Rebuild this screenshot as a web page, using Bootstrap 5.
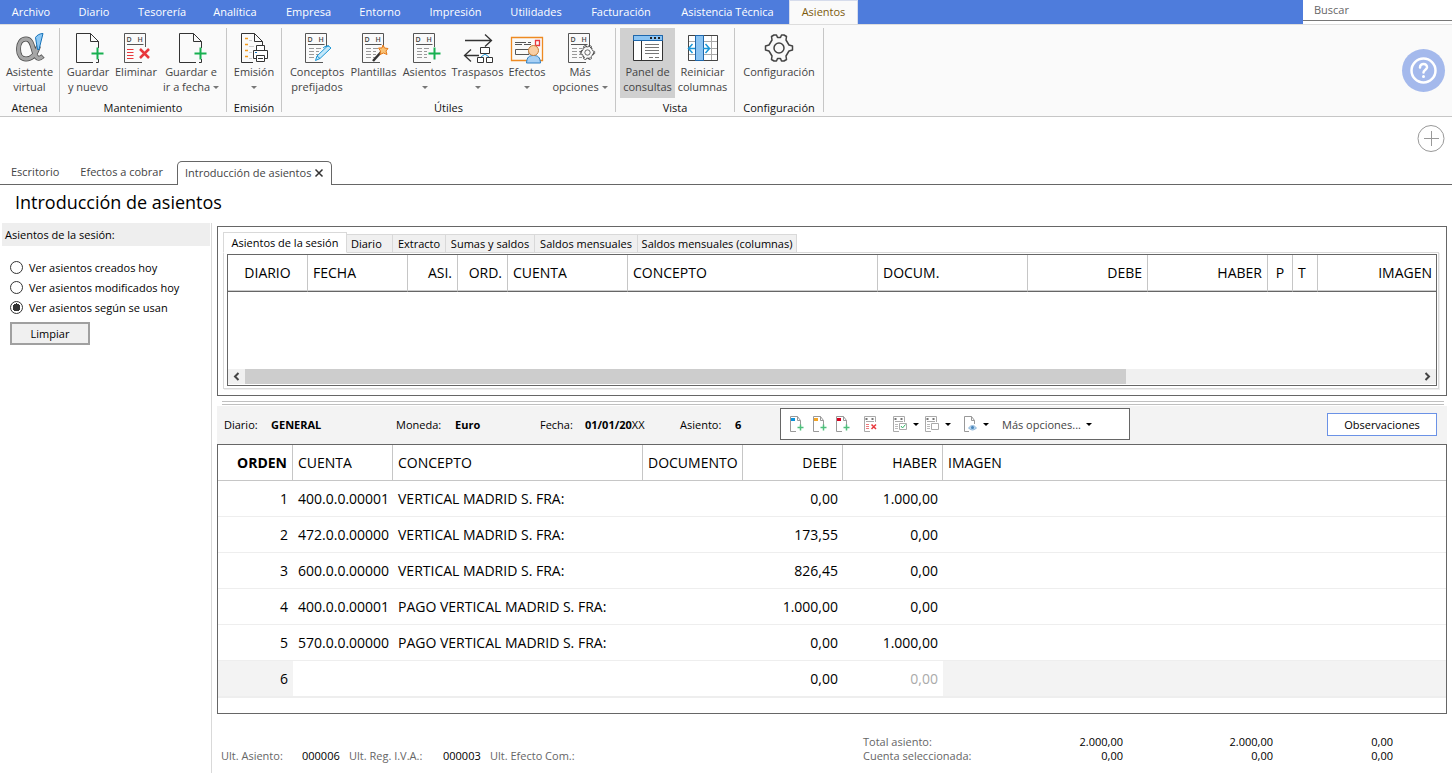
<!DOCTYPE html>
<html lang="es">
<head>
<meta charset="utf-8">
<meta name="viewport" content="width=device-width, initial-scale=1">
<title>Introducción de asientos</title>
<link href="https://cdn.jsdelivr.net/npm/bootstrap@5.3.0/dist/css/bootstrap.min.css" rel="stylesheet">
<style>
  :root { --blue: #4e7cdc; --ink: #666; --rule: #c6c6c6; --soft: #f3f3f3; }
  body { font: 11px/15px "Open Sans", "Noto Sans", sans-serif; color: #000; background: #fff; }
  button, input { font: inherit; }
  svg { display: block; fill: none; }

  /* menu bar */
  .menubar { background: var(--blue); height: 24px; }
  .menugrid { display: grid; grid-template-columns: 62px 64px 72px 74px 73px 70px 81px 80px 90px 123px 69px; }
  .menugrid a { color: #fff; text-decoration: none; text-align: center; line-height: 24px; }
  .menugrid a.on { background: #fafafa; color: #7d5a0c; border: 1px solid #d6dcec; border-bottom: 0; line-height: 22px; }
  .finder { width: 149px; background: #fff; }
  .finder input { width: 100%; height: 21px; border: 0; border-bottom: 1px solid #777; border-radius: 0; padding: 0 11px 2px; color: #555; outline: 0; }
  .finder input::placeholder { color: #666; opacity: 1; }

  /* ribbon */
  .ribbon { background: #fafafa; border-bottom: 1px solid var(--rule); border-top: 1px solid #ddd; height: 93px; }
  .rgroup { border-right: 1px solid var(--rule); margin: 3px 0 4px; padding: 0 4px; }
  .rgroup h2 { font-size: 11px; line-height: 15px; margin: 2px 0 0; text-align: center; color: #111; }
  .tool { display: flex; flex-direction: column; align-items: center; justify-content: flex-start; border: 0; background: none; padding: 4px 0 0; color: #444; height: 70px; white-space: nowrap; flex: none; }
  .tool svg { flex: none; }
  .tool span { display: block; line-height: 15px; }
  .tool.on { background: #d0d0d0; }
  .car { display: inline-block; width: 0; height: 0; border: 3px solid transparent; border-top-color: #777; border-bottom: 0; vertical-align: 2px; }
  .w44 { width: 44px; } .w46 { width: 46px; } .w48 { width: 48px; } .w51 { width: 51px; } .w55 { width: 55px; }
  .w62 { width: 62px; } .w80 { width: 80px; }
  .icons text { font: 600 7px "Open Sans", sans-serif; fill: #444; stroke: none; }
  .help { width: 43px; height: 43px; border: 0; padding: 0; border-radius: 50%; background: #a4b9ec; margin-right: 7px; transform: none; }
  .adder { padding: 8px 7px 8px 0; }
  .round { width: 28px; height: 28px; border: 0; padding: 0; background: none; }

  /* document tabs */
  .doctabs { border-bottom: 1px solid var(--ink); height: 24px; padding-left: 11px; }
  .doctabs a { color: #444; text-decoration: none; line-height: 22px; }
  .doctabs > a { margin-right: 21px; }
  .doctabs > a + a { margin-right: 14px; }
  .doctabs .on { border: 1px solid var(--ink); border-bottom: 0; border-radius: 5px 5px 0 0; background: #fff; height: 24px; padding: 0 7px 2px; gap: 3px; }
  .doctabs button { border: 0; background: none; padding: 0; }
  h1 { font-size: 18px; line-height: 24px; margin: 5px 0 9px 15px; }

  /* side panel */
  .side { width: 212px; border-right: 1px solid #d9d9d9; flex: none; }
  .side h2 { background: #eee; font-size: 11px; line-height: 22px; margin: 0 1px 11px 2px; padding: 1px 0 0 3px; height: 23px; }
  .side label { display: flex; align-items: center; gap: 6px; height: 20px; padding-left: 10px; }
  .side input { appearance: none; width: 13px; height: 13px; margin: 0; border: 1px solid #333; border-radius: 50%; background: #fff; }
  .side input:checked { background: radial-gradient(circle, #333 0 4px, #fff 4px); }
  .clear { margin: 5px 0 0 10px; width: 80px; height: 23px; padding: 0; border: 2px solid #a0a0a0; background: #f0f0f0; }

  /* query panel */
  .work { padding: 3px 5px 0; }
  .query { border: 1px solid var(--ink); padding: 5px 7px 6px 5px; }
  .qtabs { display: grid; grid-template-columns: 124px 46px 53px 89px 103px 159px; align-items: end; position: relative; z-index: 1; margin-bottom: -1px; }
  .qtabs button { height: 19px; border: 1px solid #d9d9d9; border-left: 0; background: #f0f0f0; padding: 0; line-height: 17px; white-space: nowrap; }
  .qtabs button.on { height: 21px; background: #fff; border-left: 1px solid #d9d9d9; border-bottom-color: #fff; }
  .qbody { border: 1px solid #d9d9d9; box-shadow: 1px 1px 0 #eee; padding: 1px 1px 2px 3px; }
  .qgrid { border: 1px solid var(--ink); height: 132px; }
  .grid { table-layout: fixed; width: 100%; border-collapse: separate; border-spacing: 0; font-size: 14px; line-height: 20px; }
  .grid th { font-weight: 400; height: 36px; padding: 0 5px; border-right: 1px solid var(--rule); border-bottom: 1px solid var(--rule); white-space: nowrap; }
  .grid th:last-child { border-right: 0; }
  .grid td { height: 36px; padding: 0 5px; border-bottom: 1px solid #eee; white-space: nowrap; }
  .qgrid th { border-bottom: 1px solid var(--ink); box-shadow: inset 0 -1px 0 #ccc; height: 37px; }
  .qgrid th:last-child { padding-right: 4px; }
  .track { background: #f0f0f0; height: 15px; margin-bottom: 1px; }
  .track button { width: 17px; border: 0; background: none; padding: 0 5px; }
  .thumb { background: #cdcdcd; width: 75%; }
  .splitter { height: 4px; margin: 5px 3px 1px 5px; border: 1px solid #c0c0c0; border-width: 1px 0; }

  /* entry header */
  .entry { background: var(--soft); height: 38px; padding: 0 10px 2px 7px; }
  .facts { display: grid; grid-template-columns: 47px 125px 59px 85px 45px 95px 55px 45px; flex: none; }
  .bar { border: 1px solid var(--ink); background: #fff; width: 350px; height: 32px; padding-left: 7px; flex: none; }
  .bar button { border: 0; background: none; padding: 0; color: #444; display: flex; align-items: center; margin-right: 7px; }
  .bar button.far { margin-right: 13px; }
  .bar button.near { margin-right: 5px; }
  .bar .car { border-top-color: #000; margin-left: 5px; }
  .obs { width: 110px; height: 23px; padding: 0; border: 1px solid #6b92e6; background: #fff; }
  .lines { border: 1px solid var(--ink); height: 270px; }
  .lines tr.fresh td { background: var(--soft); height: 37px; border-bottom: 2px solid #eee; }
  .lines tr.fresh td.edit { background: #fff; }
  .lines tr.fresh td.idle { color: #aaa; }

  /* footer */
  .foot { color: #666; line-height: 14px; padding: 21px 0 0 4px; }
  .foot b { color: #000; font-weight: 400; }
  .last { display: grid; grid-template-columns: 81px 47px 94px 47px auto; align-self: end; }
  .sums { display: grid; grid-template-columns: 110px 150px 150px 120px; margin-right: 54px; }
  .sums b { text-align: right; }
</style>
</head>
<body>
<svg width="0" height="0" class="position-absolute icons" aria-hidden="true">
  <defs>
    <symbol id="page" viewBox="0 0 32 32">
      <path d="M21 30.500H4.500V1.500H18.500L26.500 9.500V16M18.500 1.500V9.500H26.500M24 30.500H26.500V27" stroke="#333"/>
      <path d="M25.500 15.500V27.500M19.500 21.500H31.500" stroke="#17b050" stroke-width="2"/>
    </symbol>
    <symbol id="ledger" viewBox="0 0 32 32">
      <path d="M22 30.500H4.500V1.500H25.500V15M7 12.500H23.500" stroke="#555"/>
      <text x="6.500" y="9.500">D</text><text x="17.500" y="9.500">H</text>
    </symbol>
    <symbol id="rows" viewBox="0 0 32 32"><path d="M8 16.500H13M8 19.500H13M8 22.500H13M8 25.500H13M15 16.500H20M15 19.500H18M15 22.500H18M15 25.500H18" stroke="#999"/></symbol>
    <symbol id="gear" viewBox="0 0 32 32">
      <path d="M11 3H13.500L14.500 5.500H17.500L18.500 3H21L23.500 4.500L23 8L24.500 10.500L26 13L29.500 14V18L26 19L24.500 21.500L23 24L23.500 27.500L21 29H18.500L17.500 26.500H14.500L13.500 29H11L8.500 27.500L9 24L7.500 21.500L6 19L2.500 18V14L6 13L7.500 10.500L9 8L8.500 4.500Z" stroke="#444" stroke-width="1.500" stroke-linejoin="round"/>
      <circle cx="16" cy="16" r="5" stroke="#444" stroke-width="1.500"/>
    </symbol>
    <symbol id="mini" viewBox="0 0 16 16">
      <path d="M8 15.500H2.500V.500H9.500L12.500 4.500V9M9.500 .500V4.500H12.500" stroke="#999"/>
      <path d="M12.500 8.500V14.500M9.500 11.500H15.500" stroke="#4fc07c" stroke-width="1.500"/>
    </symbol>
    <symbol id="miniledger" viewBox="0 0 16 16">
      <path d="M7 15.500H1.500V.500H12.500V6M3 5.500H11" stroke="#aaa"/><path d="M3.500 2V4M9.500 2V4" stroke="#777" stroke-width="2"/>
    </symbol>
  </defs>
</svg>

<div class="d-flex flex-column min-vh-100">
<nav class="menubar d-flex justify-content-between">
  <div class="menugrid">
    <a href="#">Archivo</a><a href="#">Diario</a><a href="#">Tesorería</a><a href="#">Analítica</a><a href="#">Empresa</a><a href="#">Entorno</a><a href="#">Impresión</a><a href="#">Utilidades</a><a href="#">Facturación</a><a href="#">Asistencia Técnica</a><a href="#" class="on">Asientos</a>
  </div>
  <div class="finder"><input type="text" placeholder="Buscar" aria-label="Buscar"></div>
</nav>

<header class="ribbon d-flex icons">
  <section class="rgroup">
    <div class="d-flex"><button class="tool w51" type="button">
      <svg width="32" height="32" viewBox="0 0 32 32"><path d="M24.500 14C22 22 17.500 27 12 27C7.500 27 4.500 23 4.500 17C4.500 11 7.500 7 12 7C18 7 18.500 15 20.500 21C22 26 24.500 28 29 24" stroke="#4a4a4a" stroke-width="5"/><path d="M24.500 14C22 22 17.500 27 12 27C7.500 27 4.500 23 4.500 17C4.500 11 7.500 7 12 7C18 7 18.500 15 20.500 21C22 26 24.500 28 28.500 24.500" stroke="#a6a6a6" stroke-width="3.500"/><path d="M21.500 5.500C23 3 26 1.500 29 1.500L25 17.500H23.500Z" fill="#8cc8f5" stroke="#1672b8"/></svg>
      <span>Asistente</span><span>virtual</span></button></div>
    <h2>Atenea</h2>
  </section>
  <section class="rgroup">
    <div class="d-flex">
      <button class="tool w48" type="button"><svg width="32" height="32"><use href="#page"/></svg><span>Guardar</span><span>y nuevo</span></button>
      <button class="tool w48" type="button"><svg width="32" height="32" viewBox="0 0 32 32"><use href="#ledger"/><path d="M7 17.500H13.500M7 20.500H13.500M7 23.500H13.500M7 26.500H13.500" stroke="#e8383d"/><path d="M20 17L29 26M29 17L20 26" stroke="#e8383d" stroke-width="2.500"/></svg><span>Eliminar</span></button>
      <button class="tool w62" type="button"><svg width="32" height="32"><use href="#page"/></svg><span>Guardar e</span><span>ir a fecha <i class="car"></i></span></button>
    </div>
    <h2>Mantenimiento</h2>
  </section>
  <section class="rgroup">
    <div class="d-flex"><button class="tool w46" type="button">
      <svg width="32" height="32" viewBox="0 0 32 32"><path d="M15 30.500H3.500V1.500H16.500L24.500 9.500V13M16.500 1.500V9.500H24.500" stroke="#333"/><path d="M7 6.500H10M7 12.500H10M7 18.500H10M7 24.500H10" stroke="#f29a1f" stroke-width="1.500"/><path d="M11 8.500H14M11 14.500H16M11 20.500H14M11 26.500H14" stroke="#ccc"/><path d="M18.500 18V13.500H26.500V18M18 26.500H15.500V18.500H29.500V26.500H27M18.500 23.500H26.500V29.500H18.500ZM20 26.500H25" fill="#fff" stroke="#333"/><path d="M17 20.500H19" stroke="#1672b8"/></svg>
      <span>Emisión</span><span><i class="car"></i></span></button></div>
    <h2>Emisión</h2>
  </section>
  <section class="rgroup">
    <div class="d-flex">
      <button class="tool w62" type="button"><svg width="32" height="32" viewBox="0 0 32 32"><use href="#ledger"/><use href="#rows"/><path d="M14.500 28.500L16 24L27 13.500L30 16L19 26.500ZM16 24L19 26.500M22 16L24 14.500L28 14" fill="#c4e8fa" stroke="#1b96d6"/></svg><span>Conceptos</span><span>prefijados</span></button>
      <button class="tool w51" type="button"><svg width="32" height="32" viewBox="0 0 32 32"><use href="#ledger"/><use href="#rows"/><path d="M15 29L24 19" stroke="#333" stroke-width="2.500"/><path d="M25 13L26.500 16L30 16.500L28 19L29 22.500L25.500 21L22 22.500L22.500 19L20.500 16L24 16Z" fill="#f9c377" stroke="#e57917"/></svg><span>Plantillas</span></button>
      <button class="tool w51" type="button"><svg width="32" height="32" viewBox="0 0 32 32"><use href="#ledger"/><use href="#rows"/><path d="M25.500 15.500V27.500M19.500 21.500H31.500" stroke="#17b050" stroke-width="2"/></svg><span>Asientos</span><span><i class="car"></i></span></button>
      <button class="tool w55" type="button"><svg width="32" height="32" viewBox="0 0 32 32"><path d="M3 8.500H29M23 2.500L29.500 8.500L23 14.500M17 23.500H3M9 17.500L2.500 23.500L9 29.500" stroke="#333" stroke-width="1.300"/><path d="M18.500 15.500H27.500V21.500H18.500ZM15.500 25.500H21.500V30.500H15.500ZM24.500 25.500H30.500V30.500H24.500Z" stroke="#333" fill="#fff"/><path d="M23 22L19 25M23 22L27 25" stroke="#1b96d6"/></svg><span>Traspasos</span><span><i class="car"></i></span></button>
      <button class="tool w44" type="button"><svg width="34" height="32" viewBox="0 0 34 32"><path d="M1.500 5.500H32.500V28.500H1.500Z" stroke="#ee8a22" stroke-width="1.300"/><path d="M5 10.500H16M5 12.500H12M14 12.500H21M18 10.500H21M5.500 17.500H19V22.500H5.500Z" stroke="#555"/><path d="M25.500 8.500H29.500V13.500H25.500Z" stroke="#e8383d" stroke-width="1.300"/><path d="M16.500 31C17 25 19 23.500 23.500 23.500S30 25 30.500 31Z" fill="#a7d0f5" stroke="#2d7fc4"/><circle cx="23.500" cy="18.500" r="5" fill="#f9cfa5" stroke="#c77e37"/></svg><span>Efectos</span><span><i class="car"></i></span></button>
      <button class="tool w62" type="button"><svg width="32" height="32" viewBox="0 0 32 32"><use href="#ledger"/><use href="#rows"/><circle cx="23.500" cy="20.500" r="6" fill="#fafafa"/><use href="#gear" x="15" y="12" width="17" height="17"/><circle cx="23.500" cy="20.500" r="6" stroke="#444" stroke-dasharray="3 3"/></svg><span>Más</span><span>opciones <i class="car"></i></span></button>
    </div>
    <h2>Útiles</h2>
  </section>
  <section class="rgroup">
    <div class="d-flex">
      <button class="tool on w55" type="button"><svg width="32" height="32" viewBox="0 0 32 32"><path d="M1.500 3.500H30.500V28.500H1.500Z" fill="#fff" stroke="#333"/><path d="M1.500 3.500H30.500V8.500H1.500Z" fill="#8cc4f2" stroke="#1d67ad"/><path d="M18 6H20M22 6H24M26 6H28" stroke="#222" stroke-width="2"/><path d="M9.500 9V28" stroke="#333"/><path d="M13 12.500H27M13 15.500H27M13 18.500H27M13 21.500H27M17 25.500H21M23 25.500H27" stroke="#777"/></svg><span>Panel de</span><span>consultas</span></button>
      <button class="tool w55" type="button"><svg width="32" height="32" viewBox="0 0 32 32"><path d="M1.500 3.500H30.500V28.500H1.500ZM1.500 9.500H30.500M1.500 16.500H30.500M1.500 22.500H30.500M24.500 4V28" stroke="#aaa" fill="#fff"/><path d="M1.500 3.500H30.500V28.500H1.500Z" stroke="#444"/><path d="M8.500 3.500H16.500V28.500H8.500Z" fill="#8cc4f2" stroke="#1d67ad"/><path d="M8 16.500H2M5.500 12L1.500 16.500L5.500 21M16 16.500H22M18.500 12L22.500 16.500L18.500 21" stroke="#1b96d6" stroke-width="1.500"/></svg><span>Reiniciar</span><span>columnas</span></button>
    </div>
    <h2>Vista</h2>
  </section>
  <section class="rgroup">
    <div class="d-flex"><button class="tool w80" type="button"><svg width="32" height="32"><use href="#gear"/></svg><span>Configuración</span></button></div>
    <h2>Configuración</h2>
  </section>
  <button class="help ms-auto mt-4" type="button" aria-label="Ayuda"><svg width="43" height="43" viewBox="0 0 43 43"><circle cx="21.500" cy="21.500" r="12" stroke="#fff" stroke-width="2.500"/><path d="M18 18.500C18 13.500 25.500 14 25 18.500C24.500 21 21.500 21 21.500 23.500" stroke="#fff" stroke-width="2.500" stroke-linecap="round"/><circle cx="21.500" cy="27.500" r="1.500" fill="#fff"/></svg></button>
</header>

<div class="adder d-flex justify-content-end"><button class="round" type="button" aria-label="Añadir"><svg width="28" height="28" viewBox="0 0 28 28"><circle cx="14" cy="13.500" r="13" stroke="#999"/><path d="M14.500 6V21M7 13.500H22" stroke="#999"/></svg></button></div>

<nav class="doctabs d-flex">
  <a href="#">Escritorio</a>
  <a href="#">Efectos a cobrar</a>
  <div class="on d-flex align-items-center"><a href="#">Introducción de asientos</a><button type="button" aria-label="Cerrar"><svg width="10" height="10" viewBox="0 0 10 10"><path d="M1.500 1.500L8.500 8.500M8.500 1.500L1.500 8.500" stroke="#333" stroke-width="1.500"/></svg></button></div>
</nav>

<h1 class="fw-normal">Introducción de asientos</h1>

<div class="d-flex flex-grow-1">
  <aside class="side">
    <h2 class="fw-normal">Asientos de la sesión:</h2>
    <label><input type="radio" name="ver"> Ver asientos creados hoy</label>
    <label><input type="radio" name="ver"> Ver asientos modificados hoy</label>
    <label><input type="radio" name="ver" checked> Ver asientos según se usan</label>
    <button class="clear" type="button">Limpiar</button>
  </aside>

  <main class="work flex-grow-1 overflow-hidden">
    <section class="query">
      <div class="qtabs">
        <button class="on" type="button">Asientos de la sesión</button>
        <button class="text-start ps-1" type="button">Diario</button>
        <button type="button">Extracto</button>
        <button type="button">Sumas y saldos</button>
        <button type="button">Saldos mensuales</button>
        <button type="button">Saldos mensuales (columnas)</button>
      </div>
      <div class="qbody">
        <div class="qgrid d-flex flex-column">
          <table class="grid">
            <colgroup><col width="80"><col width="100"><col width="50"><col width="50"><col width="120"><col width="250"><col width="150"><col width="120"><col width="120"><col width="25"><col width="25"><col></colgroup>
            <thead><tr><th class="text-center">DIARIO</th><th>FECHA</th><th class="text-end">ASI.</th><th class="text-end">ORD.</th><th>CUENTA</th><th>CONCEPTO</th><th>DOCUM.</th><th class="text-end">DEBE</th><th class="text-end">HABER</th><th class="text-center">P</th><th>T</th><th class="text-end">IMAGEN</th></tr></thead>
          </table>
          <div class="track d-flex mt-auto">
            <button type="button" aria-label="Desplazar a la izquierda"><svg width="7" height="9" viewBox="0 0 7 9"><path d="M5.500 1L2 4.500L5.500 8" stroke="#444" stroke-width="2"/></svg></button>
            <div class="flex-grow-1 d-flex"><div class="thumb"></div></div>
            <button type="button" aria-label="Desplazar a la derecha"><svg width="7" height="9" viewBox="0 0 7 9"><path d="M1.500 1L5 4.500L1.500 8" stroke="#444" stroke-width="2"/></svg></button>
          </div>
        </div>
      </div>
    </section>

    <div class="splitter"></div>

    <section class="entry d-flex align-items-center">
      <div class="facts"><span>Diario:</span><b>GENERAL</b><span>Moneda:</span><b>Euro</b><span>Fecha:</span><span><b>01/01/20</b>XX</span><span>Asiento:</span><b>6</b></div>
      <div class="bar d-flex align-items-center">
        <button type="button" aria-label="Nuevo asiento"><svg width="16" height="16" viewBox="0 0 16 16"><use href="#mini"/><path d="M3 2H7V5H3Z" fill="#0a93dc"/></svg></button>
        <button type="button" aria-label="Nueva línea"><svg width="16" height="16" viewBox="0 0 16 16"><use href="#mini"/><path d="M3 2H7V5H3Z" fill="#f3a526"/></svg></button>
        <button class="far" type="button" aria-label="Nuevo vencimiento"><svg width="16" height="16" viewBox="0 0 16 16"><use href="#mini"/><path d="M3 2H7V5H3Z" fill="#d8001f"/></svg></button>
        <button class="far" type="button" aria-label="Eliminar línea"><svg width="16" height="16" viewBox="0 0 16 16"><use href="#miniledger"/><path d="M3 8.500H6M3 10.500H6M3 12.500H6" stroke="#ee7a7d"/><path d="M8.500 8.500L13 13M13 8.500L8.500 13" stroke="#e8383d" stroke-width="1.500"/></svg></button>
        <button class="near" type="button" aria-label="Validar"><svg width="16" height="16" viewBox="0 0 16 16"><use href="#miniledger"/><path d="M3 8.500H6M3 10.500H6M3 12.500H6" stroke="#bbb"/><path d="M7.500 7.500H14.500V13.500H7.500Z" fill="#fff" stroke="#aaa"/><path d="M9 10L10.500 12L13.500 8.500" stroke="#35b569"/></svg><i class="car"></i></button>
        <button type="button" aria-label="Marcar"><svg width="16" height="16" viewBox="0 0 16 16"><use href="#miniledger"/><path d="M3 8.500H6M3 10.500H6M3 12.500H6" stroke="#bbb"/><path d="M7.500 7.500H14.500V13.500H7.500Z" fill="#fff" stroke="#aaa"/></svg><i class="car"></i></button>
        <button class="far ms-1" type="button" aria-label="Ver documento"><svg width="16" height="16" viewBox="0 0 16 16"><path d="M7 15.500H2.500V.500H9.500L12.500 4.500V8M9.500 .500V4.500H12.500" stroke="#999"/><path d="M6.500 12Q10.500 7 14.500 12Q10.500 16 6.500 12Z" fill="#b4d4ee" stroke="#8fb6d8"/><circle cx="10.500" cy="11.500" r="1.500" fill="#4783b8"/></svg><i class="car"></i></button>
        <button type="button">Más opciones...<i class="car"></i></button>
      </div>
      <button class="obs ms-auto" type="button">Observaciones</button>
    </section>

    <section class="lines">
      <table class="grid">
        <colgroup><col width="75"><col width="100"><col width="250"><col width="100"><col width="100"><col width="100"><col></colgroup>
        <thead><tr><th class="text-end fw-bold">ORDEN</th><th>CUENTA</th><th>CONCEPTO</th><th>DOCUMENTO</th><th class="text-end">DEBE</th><th class="text-end">HABER</th><th>IMAGEN</th></tr></thead>
        <tbody>
          <tr><td class="text-end">1</td><td>400.0.0.00001</td><td>VERTICAL MADRID S. FRA:</td><td></td><td class="text-end">0,00</td><td class="text-end">1.000,00</td><td></td></tr>
          <tr><td class="text-end">2</td><td>472.0.0.00000</td><td>VERTICAL MADRID S. FRA:</td><td></td><td class="text-end">173,55</td><td class="text-end">0,00</td><td></td></tr>
          <tr><td class="text-end">3</td><td>600.0.0.00000</td><td>VERTICAL MADRID S. FRA:</td><td></td><td class="text-end">826,45</td><td class="text-end">0,00</td><td></td></tr>
          <tr><td class="text-end">4</td><td>400.0.0.00001</td><td>PAGO VERTICAL MADRID S. FRA:</td><td></td><td class="text-end">1.000,00</td><td class="text-end">0,00</td><td></td></tr>
          <tr><td class="text-end">5</td><td>570.0.0.00000</td><td>PAGO VERTICAL MADRID S. FRA:</td><td></td><td class="text-end">0,00</td><td class="text-end">1.000,00</td><td></td></tr>
          <tr class="fresh"><td class="text-end">6</td><td class="edit"></td><td class="edit"></td><td class="edit"></td><td class="edit text-end">0,00</td><td class="edit idle text-end">0,00</td><td></td></tr>
        </tbody>
      </table>
    </section>

    <footer class="foot d-flex justify-content-between">
      <div class="last"><span>Ult. Asiento:</span><b>000006</b><span>Ult. Reg. I.V.A.:</span><b>000003</b><span>Ult. Efecto Com.:</span></div>
      <div class="sums"><span>Total asiento:</span><b>2.000,00</b><b>2.000,00</b><b>0,00</b><span>Cuenta seleccionada:</span><b>0,00</b><b>0,00</b><b>0,00</b></div>
    </footer>
  </main>
</div>
</div>
<script src="https://cdn.jsdelivr.net/npm/bootstrap@5.3.0/dist/js/bootstrap.bundle.min.js"></script>
</body>
</html>
